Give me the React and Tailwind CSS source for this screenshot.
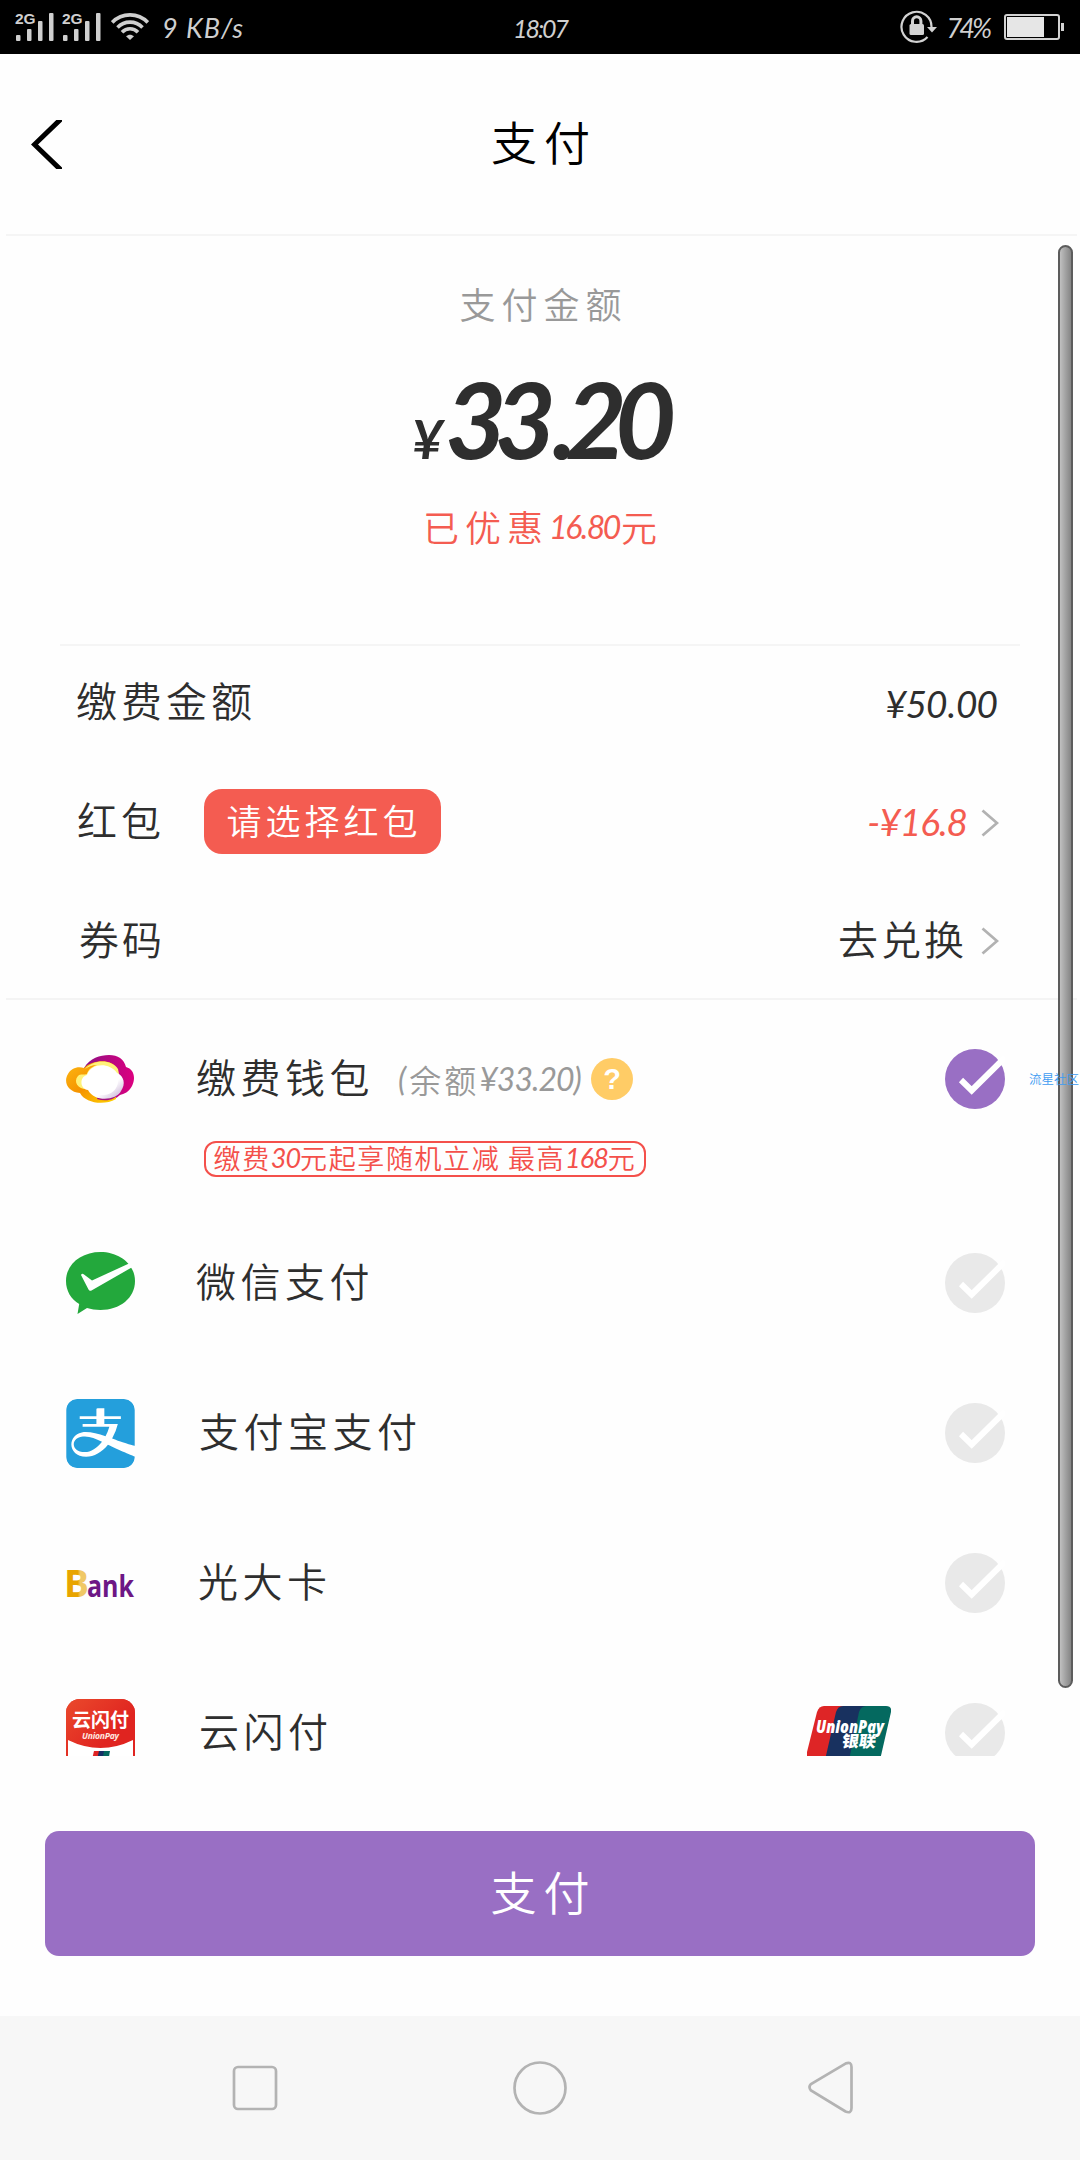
import React from "react";
import { SiAlipay } from "react-icons/si";

const CJK = "font-['Noto_Sans_CJK_SC',sans-serif] font-[350]";
const NUM = "font-['Lato',sans-serif] font-normal italic";

function Signal() {
  return (
    <svg className="h-[30px] w-[40px] overflow-visible" viewBox="0 0 40 30" fill="#cfcfcf">
      <text x="0" y="12" fontSize="15.500" fontWeight="bold" fontFamily="Liberation Sans, sans-serif">2G</text>
      <rect x="1" y="23" width="4.5" height="6" rx="1" />
      <rect x="12" y="17" width="4.5" height="12" rx="1" />
      <rect x="23" y="9" width="4.5" height="20" rx="1" />
      <rect x="34" y="1" width="4.5" height="28" rx="1" />
    </svg>
  );
}

function Wifi() {
  return (
    <svg className="ml-[9px] h-[28px] w-[38px]" viewBox="0 0 38 28" fill="none" stroke="#cfcfcf" strokeWidth="3.6">
      <path d="M1.2 9.4C11-.7 27-.7 36.800 9.400" />
      <path d="M6.500 14.400C13.500 7.300 24.500 7.300 31.500 14.400" />
      <path d="M11 19.200C15.500 14.500 22.500 14.500 27 19.200" />
      <path d="M15 23.300C17.500 21.200 20.500 21.200 23 23.300L19 27Z" fill="#cfcfcf" stroke="none" />
    </svg>
  );
}

function StatusBar() {
  return (
    <header className="grid h-[54px] grid-cols-3 items-center bg-black text-[#cfcfcf]">
      <div className="flex items-center pl-[15px]">
        <Signal />
        <div className="w-[7px]" />
        <Signal />
        <Wifi />
        <span className={`${NUM} ml-[13px] text-[27px] leading-none tracking-[1px] whitespace-nowrap`}>9 KB/s</span>
      </div>
      <span className={`${NUM} pt-[2px] text-center text-[25px] leading-none tracking-[-2px]`}>18:07</span>
      <div className="flex items-center justify-end pr-[15px]">
        <svg className="h-[34px] w-[38px]" viewBox="0 0 38 34" fill="none" stroke="#d2d2d2" strokeWidth="2.2">
          <path d="M27.500 27A15 15 0 1 1 31.500 17" />
          <path d="M27 17H37L32 22.500Z" fill="#d2d2d2" stroke="none" />
          <rect x="9.500" y="14" width="14.500" height="11" rx="1.500" fill="#d2d2d2" stroke="none" />
          <path d="M12.500 15V11a4.200 4.200 0 0 1 8.400 0v4" strokeWidth="3" />
        </svg>
        <span className={`${NUM} ml-[9px] text-[27px] leading-none tracking-[-3px]`}>74%</span>
        <svg className="ml-[15px] h-[26px] w-[61px]" viewBox="0 0 61 26">
          <rect x="1" y="1" width="54" height="24" rx="2" fill="none" stroke="#d2d2d2" strokeWidth="2" />
          <rect x="3" y="3" width="37" height="20" fill="#e6e6e6" />
          <rect x="57" y="9" width="3" height="8" fill="#d2d2d2" />
        </svg>
      </div>
    </header>
  );
}

function Chevron() {
  return (
    <svg className="mt-[3px] ml-[14px] h-[28px] w-[18px]" viewBox="0 0 18 28" fill="none" stroke="#b2b2b2" strokeWidth="2.800">
      <path d="M1.500 1.500L16 14L1.500 26.500" />
    </svg>
  );
}

function Check({ on }) {
  return (
    <svg className="size-[60px] shrink-0" viewBox="0 0 60 60">
      <circle cx="30" cy="30" r="30" fill={on ? "#996fc4" : "#e9e9e9"} />
      <path d="M16 31L26.700 41.500L60 8.500" fill="none" stroke="#fff" strokeWidth="6" />
    </svg>
  );
}

function WalletLogo() {
  return (
    <svg className="h-[50px] w-[69px]" viewBox="0 0 69 50">
      <defs>
        <linearGradient id="gold" x1="0" y1="0" x2="1" y2="1">
          <stop offset="0" stopColor="#fdb813" />
          <stop offset=".5" stopColor="#f59300" />
          <stop offset="1" stopColor="#ffd500" />
        </linearGradient>
        <linearGradient id="plum" x1="0" y1="0" x2="1" y2="0">
          <stop offset="0" stopColor="#8d0f83" />
          <stop offset="1" stopColor="#dc007f" />
        </linearGradient>
        <linearGradient id="pearl" x1="0" y1="0" x2="1" y2="1">
          <stop offset="0" stopColor="#fff" />
          <stop offset=".65" stopColor="#fff" />
          <stop offset="1" stopColor="#c0a6d0" />
        </linearGradient>
      </defs>
      <path d="M18 14C24 4 34 1 43 1C52 1 58 5 60 13C68 15 70 24 66 32C63 38 58 40 54 41C48 47 39 48 30 45Z" fill="url(#plum)" />
      <path d="M18 14C26 6 46 4 51 15L50 30L50 45C38 52 19 49 14 39C2 38-3 28 2 20C5 14 12 12 18 14Z" fill="url(#gold)" />
      <path d="M54 38C50 46 40 48 31 45L36 30L54 25Z" fill="#a3127f" />
      <path d="M19 15C27 5 46 5 52 15L53 20L30 24L18 35C9 33 8 25 13 21C16 20 18 21 21 20C22 16 25 13 31 11C26 11 22 13 19 15Z" fill="#fff27a" />
      <path d="M21 21C25 9 43 8 51 19C58 22 60 30 55 37C51 46 29 49 22 36C14 35 13 23 21 21Z" fill="url(#pearl)" />
      <ellipse cx="37" cy="27" rx="15" ry="14" fill="#fff" />
    </svg>
  );
}

function WechatLogo() {
  return (
    <svg className="h-[62px] w-[69px]" viewBox="0 0 69 62">
      <path d="M34.500 0C53 0 69 12 69 29S54 58 34.500 58C29.500 58 25 57.300 21 56L11.500 62L13.200 52C5 47 0 39 0 29C0 12 15.500 0 34.500 0Z" fill="#23a83c" />
      <path d="M15 23Q16 21 18 22.500L26 28.500L63 11.500L66.500 15L25.500 38.500Q23.500 39.500 22.500 37.500Z" fill="#fff" />
    </svg>
  );
}

function AlipayLogo() {
  return (
    <div className="size-[69px] overflow-hidden rounded-[11px] bg-white">
      <SiAlipay className="size-[69px] text-[#249fdc]" />
    </div>
  );
}

function BankLogo() {
  return (
    <svg className="h-[32px] w-[69px] overflow-visible" viewBox="0 0 69 32">
      <defs>
        <linearGradient id="amber" x1="0" y1="0" x2="1" y2="0">
          <stop offset=".55" stopColor="#e8a400" />
          <stop offset=".65" stopColor="#f0c866" />
        </linearGradient>
      </defs>
      <text x="-2" y="29.500" fontSize="37" fontWeight="bold" fill="url(#amber)" fontFamily="Open Sans, sans-serif" textLength="25" lengthAdjust="spacingAndGlyphs">B</text>
      <text x="21" y="29.500" fontSize="31" fontWeight="bold" fill="#6d1785" fontFamily="Open Sans, sans-serif" textLength="47" lengthAdjust="spacingAndGlyphs">ank</text>
    </svg>
  );
}

function QuickPassLogo() {
  return (
    <div className="h-[69px] w-[69px] overflow-hidden rounded-[14px] bg-[#e02a24]">
      <svg className="h-[69px] w-[69px]" viewBox="0 0 69 69">
        <defs>
          <linearGradient id="qp" x1="0" y1="0" x2="1" y2="1">
            <stop offset="0" stopColor="#ea4a2c" />
            <stop offset=".6" stopColor="#e02420" />
          </linearGradient>
        </defs>
        <rect width="69" height="69" fill="url(#qp)" />
        <path d="M2 41Q34.500 57 67 41V69H2Z" fill="#fff" />
        <path d="M28 52H34L31 69H24Z" fill="#e02424" />
        <path d="M33 52H39L36 69H29Z" fill="#173066" />
        <path d="M38 52H44L41 69H35Z" fill="#04685f" />
        <text x="34.500" y="27.500" fontSize="19" fontWeight="bold" fill="#fff" textAnchor="middle" fontFamily="Noto Sans CJK SC, sans-serif">云闪付</text>
        <text x="34.500" y="39.500" fontSize="8.500" fontWeight="bold" fontStyle="italic" fill="#ffe9e2" textAnchor="middle" fontFamily="Open Sans, sans-serif" textLength="37">UnionPay</text>
      </svg>
    </div>
  );
}

function UnionPayLogo() {
  return (
    <svg className="mr-[54px] h-[54px] w-[84px] shrink-0" viewBox="0 0 84 54">
      <path d="M17 0H36L24 54H-2L10 6Q12 0 17 0Z" fill="#de2526" />
      <path d="M36 0H61L46 54H18L29 6Q31 0 36 0Z" fill="#18315f" />
      <path d="M59 0H79Q85 0 84 6L73 54H42L52 6Q54 0 59 0Z" fill="#04695f" />
      <text x="9" y="26.500" fontSize="17" fontWeight="800" fontStyle="italic" fill="#fff" fontFamily="Open Sans, sans-serif" textLength="68" lengthAdjust="spacingAndGlyphs">UnionPay</text>
      <text x="40" y="41.500" fontSize="16" fontWeight="900" fill="#fff" fontFamily="Noto Sans CJK SC, sans-serif" textLength="34" lengthAdjust="spacingAndGlyphs" transform="skewX(-8)">银联</text>
    </svg>
  );
}

function Method({ logo, name, nudge, extra }) {
  return (
    <div className="flex h-[150px] shrink-0 items-center pr-[75px] pl-[66px]">
      <div className="flex w-[130px] shrink-0">{logo}</div>
      <span className={`${nudge} flex-1 pb-[7px] text-[40px] leading-none tracking-[4.500px]`}>{name}</span>
      {extra}
      <Check />
    </div>
  );
}

export default function App() {
  return (
    <div className={`${CJK} relative flex h-[2160px] w-[1080px] flex-col overflow-hidden bg-[#fefefe] text-[#2e2e2e]`}>
      <StatusBar />

      <div className="mr-[3px] ml-[6px] grid h-[182px] grid-cols-3 items-center border-b-2 border-[#f5f5f5] text-black">
        <svg className="ml-[25px] h-[49px] w-[31px]" viewBox="0 0 31 49">
          <path d="M32 -3L3.500 24.500L32 52" fill="none" stroke="#000" strokeWidth="5" />
        </svg>
        <h1 className="-mr-[5px] pb-[9px] text-center text-[46px] leading-none tracking-[7px]">支付</h1>
      </div>

      <section className="mx-[60px] flex h-[410px] flex-col items-center border-b-2 border-[#f5f5f5]">
        <p className="mt-[49px] mr-[-7px] text-[36px] leading-none tracking-[6px] text-[#999]">支付金额</p>
        <div className={`${NUM} mt-[42px] mr-[4px] flex h-[110px] items-baseline`}>
          <span className="mr-[2px] text-[54px] leading-none font-bold">¥</span>
          <span className="text-[106px] leading-[110px] font-bold tracking-[-12px]">33<span className="ml-[8px]">.</span>20</span>
        </div>
        <p className="mt-[35px] flex items-center text-[36px] leading-none tracking-[6px] text-[#f45c51]">
          已优惠<span className={`${NUM} pt-[2px] text-[32px] tracking-[-2.500px]`}>16<span className="mx-[1px]">.</span>80</span><span className="ml-[2px] tracking-normal">元</span>
        </p>
      </section>

      <section className="mr-[3px] ml-[6px] flex h-[354px] flex-col border-b-2 border-[#f4f4f4] pr-[78px] pl-[70px]">
        <div className="flex h-[116px] items-center justify-between text-[41px] leading-none">
          <span className="pb-[8px] tracking-[4px]">缴费金额</span>
          <span className={`${NUM} mr-[2px] text-[37px] tracking-[-1px]`}>¥50<span className="mx-[1px]">.</span>00</span>
        </div>
        <div className="flex h-[120px] items-center text-[40px] leading-none">
          <span className="w-[128px] pb-[5px] pl-[1px] tracking-[4px]">红包</span>
          <span className="flex h-[65px] w-[237px] items-center justify-center rounded-[18px] bg-[#f45c51] pb-[3px] pl-[3px] text-[35px] tracking-[4px] text-white">请选择红包</span>
          <span className={`${NUM} ml-auto text-[37px] tracking-[-1px] text-[#f45c51]`}>-¥16.8</span>
          <Chevron />
        </div>
        <div className="flex h-[118px] items-center text-[40px] leading-none">
          <span className="pb-[2px] pl-[3px] tracking-[3px]">券码</span>
          <span className="ml-auto pb-[2px] tracking-[3px]">去兑换</span>
          <Chevron />
        </div>
      </section>

      <main className="flex h-[756px] flex-col overflow-hidden">
        <div className="h-[208px] shrink-0 pt-[49px] pr-[75px] pl-[66px]">
          <div className="flex h-[60px] items-center">
            <div className="flex w-[130px] shrink-0"><WalletLogo /></div>
            <span className="pb-[6px] text-[40px] leading-none tracking-[4.500px]">缴费钱包</span>
            <span className="ml-[24px] flex w-[193px] items-center text-[32px] leading-none whitespace-nowrap text-[#999]">
              <span className={`${NUM} mr-[3px]`}>(</span><span className="tracking-[3px]">余额</span><span className={`${NUM} tracking-[-1px]`}>¥33.20)</span>
            </span>
            <span className="flex size-[42px] items-center justify-center rounded-full bg-[#ffcc66] font-['Liberation_Sans',sans-serif] text-[29px] leading-none font-bold text-white">?</span>
            <div className="ml-auto"><Check on /></div>
          </div>
          <div className="mt-[32px] ml-[138px] flex h-[36px] w-[442px] items-center justify-center rounded-[12px] border-2 border-[#f4504b] pb-[3px] text-[27px] leading-none tracking-[1.600px] whitespace-nowrap text-[#f4504b]">
            缴费<span className={`${NUM} tracking-[-1px]`}>30</span>元起享随机立减&nbsp;最高<span className={`${NUM} tracking-[-1px]`}>168</span>元
          </div>
        </div>
        <Method logo={<WechatLogo />} name="微信支付" nudge="" />
        <Method logo={<AlipayLogo />} name="支付宝支付" nudge="pl-[3px]" />
        <Method logo={<BankLogo />} name="光大卡" nudge="pl-[2px]" />
        <Method logo={<QuickPassLogo />} name="云闪付" nudge="pl-[3px]" extra={<UnionPayLogo />} />
      </main>

      <button className="mx-[45px] mt-[75px] h-[125px] rounded-[14px] bg-[#996fc4] pb-[8px] pl-[7px] text-[46px] leading-none tracking-[7px] text-white">支付</button>

      <nav className="mt-auto flex h-[144px] items-center justify-between bg-[#f7f7f7] pr-[226px] pl-[232px]">
        <svg className="size-[46px]" viewBox="0 0 46 46" fill="none" stroke="#b3b3b3" strokeWidth="2.700"><rect x="2" y="2" width="42" height="42" rx="4" /></svg>
        <svg className="mr-[6px] size-[56px]" viewBox="0 0 56 56" fill="none" stroke="#b3b3b3" strokeWidth="2.700"><circle cx="28" cy="28" r="25.500" /></svg>
        <svg className="h-[54px] w-[47px]" viewBox="0 0 47 54" fill="none" stroke="#b3b3b3" strokeWidth="2.700"><path d="M38.500 2.600L4 23Q1 26 4 29.500L38.500 50.500Q44.500 53 44.500 47V6Q44.500 0 38.500 2.600Z" /></svg>
      </nav>

      <div className="absolute top-[245px] left-[1058px] h-[1443px] w-[15px] rounded-full border-2 border-[#5c5c5c] bg-linear-to-r from-[#c0c0c0] to-[#858585]" />
      <span className="absolute top-[1073px] left-[1029px] text-[12.500px] leading-none whitespace-nowrap text-[#3d9bf2]">流星社区</span>
    </div>
  );
}
